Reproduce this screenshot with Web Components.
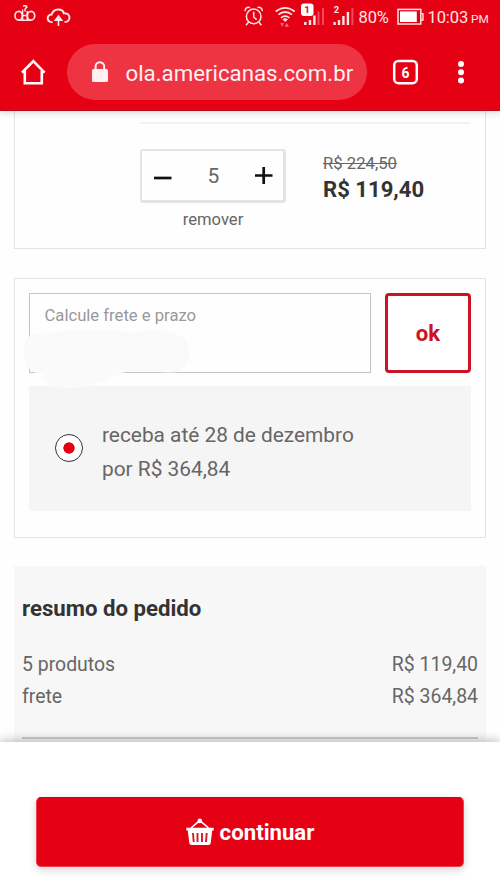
<!DOCTYPE html>
<html lang="pt-BR">
<head>
<meta charset="utf-8">
<meta name="viewport" content="width=device-width, initial-scale=1">
<title>Cesta</title>
<style>
html, body { margin: 0; height: 100%; }
body { overflow: hidden; background: #fefefe; font-family: Roboto, "Liberation Sans", sans-serif; color: #666; }
</style>
</head>
<body>
<cart-app></cart-app>
<script>
const define = (name, markup) => {
  const template = document.createElement('template');
  template.innerHTML = markup;
  customElements.define(name, class extends HTMLElement {
    constructor() {
      super();
      this.attachShadow({ mode: 'open' }).append(template.content.cloneNode(true));
    }
  });
};

define('status-bar', `
<style>
:host { display: flex; height: 34px; box-sizing: border-box; justify-content: space-between; color: #ffe4e4; }
svg { display: block; flex: none; fill: none; stroke: currentColor; }
.right { display: flex; }
span { flex: none; white-space: nowrap; line-height: 35px; height: 34px; font-size: 16.5px; }
.pct { width: 38px; margin-left: 1px; letter-spacing: -.1px; }
.time { width: 43.5px; letter-spacing: -.1px; }
.pm { width: 29px; font-size: 11.8px; line-height: 38px; }
text { stroke: none; font-weight: 700; }
</style>
<svg width="80" height="34" viewBox="0 0 80 34" stroke-width="1.7">
  <ellipse cx="18.7" cy="15.7" rx="3.7" ry="4.4"/><ellipse cx="31" cy="15.7" rx="3.7" ry="4.4"/>
  <path d="M18.7 20.2H31M22.6 9.6V19.5M27.2 11V19.5M21.5 15.6H28.3M23 6.1Q27.4 5.2 26.8 7.4Q24.5 8.4 25 11.5" stroke-width="1.5"/>
  <path d="M52.6 22.2C46.5 22.2 46 14.8 51.6 14.6C53.5 7.4 63 8.4 63.8 13.2C71 12.7 71.4 21.9 64.6 22.1" stroke-width="2"/>
  <path d="M58.5 26V17.5M55.3 20.3L58.5 16L61.7 20.3Z" fill="currentColor" stroke-width="1.6"/>
</svg>
<div class="right">
  <svg width="118" height="34" viewBox="240 0 118 34">
    <g stroke-width="1.5"><circle cx="253.7" cy="16.4" r="7.3"/><path d="M253.7 11.8V17L256.6 19.6M245.2 11.2A3.4 3.4 0 0 1 250 7.6M257.4 7.6A3.4 3.4 0 0 1 262.2 11.2M248.6 22L246 25.2M258.8 22L261.4 25.2"/></g>
    <g stroke-width="1.7"><path d="M275.7 11.5Q285.2 4.1 294.7 11.5M278.4 14.7Q285.2 9.3 292 14.7M281 17.8Q285.2 14.4 289.4 17.8"/><path d="M283.1 19.4Q285.2 17.8 287.3 19.4L285.2 21.5Z" fill="currentColor" stroke-width="1"/></g>
    <path d="M280.1 23H284.1L282.1 26.7ZM284.6 26.7H289L286.8 23Z" fill="#f36b75" stroke="none"/>
    <g stroke-width="2.4"><path d="M305.3 22V25M310 20V25M314.4 15.5V25M334.6 22V25M339 20V25M343.4 16V25M347.9 12V25"/><path d="M318.5 11.5V25M323 8V25M352.4 8V25" stroke="#f04d59" stroke-width="1.9"/></g>
    <rect x="301" y="3.5" width="12.5" height="12.5" rx="3" fill="#fff" stroke="none"/>
    <text x="304.2" y="13.3" font-size="9.8" fill="#b4202a">1</text>
    <text x="333.7" y="12.8" font-size="9.4" fill="#ffe4e4">2</text>
  </svg>
  <span class="pct">80%</span>
  <svg width="31" height="34" viewBox="397 0 31 34"><rect x="398" y="9.4" width="22.8" height="14.6" stroke-width="1.5"/><path d="M400 11.4H416.8V22H400Z" fill="#fff" stroke="none"/><path d="M421 13.6H423V20H421" stroke-width="1.4"/></svg>
  <span class="time">10:03</span><span class="pm">PM</span>
</div>`);

define('browser-bar', `
<style>
:host { display: flex; height: 77px; box-sizing: border-box; padding: 10px 0 11px; color: #fff; }
svg { display: block; flex: none; fill: none; stroke: currentColor; }
.url { display: flex; width: 300px; height: 56px; border-radius: 28px; background: #ee3343; color: #fff0f1; }
.url span { font-size: 22.25px; line-height: 58px; margin-left: .5px; white-space: nowrap; }
text { stroke: none; fill: #fff; font-weight: 700; }
</style>
<svg width="67" height="56" viewBox="0 44 67 56"><path d="M22 72.7L33.3 61.2L44.6 72.7M24.8 71V83.3H41.8V71" stroke-width="2.6"/></svg>
<div class="url">
  <svg width="58" height="56" viewBox="67 44 58 56"><rect x="92" y="69" width="16" height="13" rx="1.6" fill="currentColor" stroke="none"/><path d="M95.6 69.5V66.6A4.3 4.3 0 0 1 104.2 66.6V69.5" stroke-width="2"/></svg>
  <span><slot></slot></span>
</div>
<svg width="133" height="56" viewBox="367 44 133 56"><rect x="394.2" y="61" width="22.6" height="22.2" rx="4.2" stroke-width="2.5"/><text x="405.5" y="77.7" font-size="15.5" text-anchor="middle" textLength="8" lengthAdjust="spacingAndGlyphs">6</text><g fill="currentColor" stroke="none"><circle cx="461" cy="64" r="3"/><circle cx="461" cy="72.3" r="3"/><circle cx="461" cy="80.5" r="3"/></g></svg>`);

define('quantity-stepper', `
<style>
:host { display: flex; flex-direction: column; align-items: center; width: 146px; }
.box { display: flex; justify-content: space-between; align-items: center; width: 146px; height: 54px; box-sizing: border-box; border: 2.5px solid #e4e4e4; border-width: 2px 3px 3px 2px; border-radius: 3px; padding: 0 10px 0 12px; }
svg { display: block; stroke: #111; stroke-width: 2.7; }
b { font-weight: 400; font-size: 21px; line-height: 50px; }
.remove { font-size: 16.6px; line-height: 20px; margin-top: 7px; }
</style>
<div class="box">
  <svg width="18" height="22"><path d="M0 13H17.5"/></svg>
  <b><slot></slot></b>
  <svg width="18" height="22"><path d="M0 10.5H17.5M8.7 2V19"/></svg>
</div>
<span class="remove">remover</span>`);

define('price-tag', `
<style>
:host { display: flex; flex-direction: column; white-space: nowrap; }
s { font-size: 16.7px; line-height: 20px; }
b { font-size: 22.1px; line-height: 28px; color: #333; margin-top: 1px; }
</style>
<s><slot name="old"></slot></s><b><slot></slot></b>`);

define('product-card', `
<style>
:host { display: block; box-sizing: border-box; height: 138px; margin: 0 14px; border: 1px solid #e3e3e3; border-top: 0; padding: 11px 15px 0 125px; }
.row { display: flex; border-top: 2px solid #f2f2f4; padding-top: 25px; }
price-tag { margin: 5px 0 0 37px; }
</style>
<div class="row"><quantity-stepper>5</quantity-stepper><price-tag><span slot="old">R$ 224,50</span>R$ 119,40</price-tag></div>`);

define('freight-field', `
<style>
:host { display: block; position: relative; width: 342px; height: 80px; box-sizing: border-box; border: 1px solid #c4c4c4; padding: 11px 14.5px; }
span { font-size: 16.65px; line-height: 21px; color: #999; }
svg { position: absolute; left: -7px; top: 36px; z-index: 1; }
</style>
<span><slot></slot></span>
<svg width="170" height="62" viewBox="23 330 170 62"><path d="M28 337C41 331 66 331 85 330C109 328 124 333 137 332C155 329 182 330 187 343C192 354 189 365 180 371C166 376 137 366 119 374C104 382 86 389 64 388C48 387 42 381 44 374C30 374 24 366 24 352C23 344 25 340 28 337Z" fill="#fafafa"/></svg>`);

define('outline-button', `
<style>
:host { display: block; width: 86px; height: 80px; }
button { display: block; width: 100%; height: 100%; box-sizing: border-box; padding: 0; background: #fff; border: 3px solid #ca1425; border-radius: 4px; color: #ca1425; font: 700 22.2px/74px Roboto, sans-serif; }
</style>
<button><slot></slot></button>`);

define('delivery-option', `
<style>
:host { display: flex; align-items: center; height: 125px; margin-top: 13px; background: #f5f5f5; }
i { flex: none; width: 28px; height: 28px; box-sizing: border-box; margin: 0 19px 2px 26px; border: 1.5px solid #333; border-radius: 50%; background: radial-gradient(circle, #e60014 5.3px, #fff 6px); }
div { font-size: 20.85px; line-height: 34px; margin-top: 7px; white-space: nowrap; }
</style>
<i></i><div><slot></slot></div>`);

define('freight-card', `
<style>
:host { display: block; box-sizing: border-box; height: 260px; margin: 29px 14px 0; border: 1px solid #e3e3e3; padding: 14px; }
.row { display: flex; justify-content: space-between; }
</style>
<div class="row"><freight-field>Calcule frete e prazo</freight-field><outline-button>ok</outline-button></div>
<delivery-option>receba até 28 de dezembro<br>por R$ 364,84</delivery-option>`);

define('summary-line', `
<style>:host { display: flex; justify-content: space-between; font-size: 19.45px; line-height: 32px; }</style>
<span><slot></slot></span><span><slot name="value"></slot></span>`);

define('order-summary', `
<style>
:host { display: block; box-sizing: border-box; height: 176px; margin: 28px 14px 0; padding: 28px 8px 0; background: #f7f7f7; }
h2 { margin: 0 0 26px; font-size: 22.2px; line-height: 29px; color: #333; }
hr { margin: 24px 0 0; border: 0; height: 2px; background: #ccc; }
</style>
<h2>resumo do pedido</h2>
<summary-line>5 produtos<span slot="value">R$ 119,40</span></summary-line>
<summary-line>frete<span slot="value">R$ 364,84</span></summary-line>
<hr>`);

define('checkout-footer', `
<style>
:host { display: block; position: relative; flex: 1; background: #fff; box-shadow: 0 -1px 10px rgba(0,0,0,.28); padding: 55px 36px 22px; }
button { display: flex; align-items: center; justify-content: center; gap: 6px; width: 428px; height: 70px; padding: 0; border: 1px solid #ef4050; border-top-color: #b5101d; border-radius: 5px; background: #e60014; color: #fff; font: 700 22.2px/68px Roboto, sans-serif; box-shadow: 0 3px 8px rgba(0,0,0,.17); }
svg { display: block; fill: none; stroke: currentColor; }
</style>
<button>
  <svg width="28" height="28" viewBox="0 0 28 28"><path d="M0.3 9.8H27.7V12.4H26.2L24.7 25.2Q24.4 27 22.6 27H5.4Q3.6 27 3.3 25.2L1.8 12.4H.3Z" fill="currentColor" stroke="none"/><path d="M5 10L13.8 2.6L22.6 10" stroke-width="1.6"/><circle cx="13.8" cy="2.9" r="2.3" fill="currentColor" stroke="none"/><path d="M7 15L7.7 24M11.5 15V24M16 15V24M20.7 15L20 24" stroke="#d3192a" stroke-width="1.9"/></svg>
  <slot></slot>
</button>`);

define('cart-app', `
<style>
:host { display: flex; flex-direction: column; width: 500px; height: 889px; overflow: hidden; }
header { position: relative; flex: none; height: 111px; box-sizing: border-box; border-bottom: 1px solid #b80d1b; background: #e60014; box-shadow: 0 1px 8px rgba(0,0,0,.18); }
main { flex: none; height: 631px; overflow: hidden; }
</style>
<header><status-bar></status-bar><browser-bar>ola.americanas.com.br</browser-bar></header>
<main><product-card></product-card><freight-card></freight-card><order-summary></order-summary></main>
<checkout-footer>continuar</checkout-footer>`);
</script>
</body>
</html>
